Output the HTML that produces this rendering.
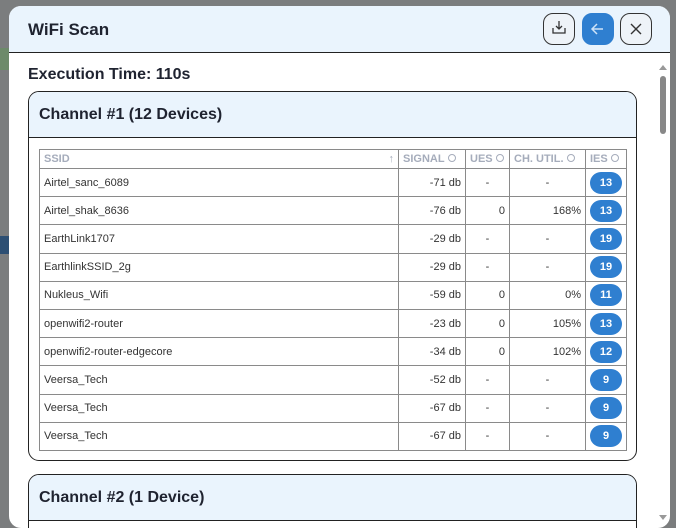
<!DOCTYPE html>
<html><head><style>
*{box-sizing:border-box;margin:0;padding:0}
body{width:676px;height:528px;overflow:hidden;background:#7b7d7e;font-family:"Liberation Sans",sans-serif;position:relative}
.modal{position:absolute;left:9px;top:6px;width:661px;height:522px;background:#fff;border-radius:12px;overflow:hidden}
.hdr{height:47px;background:#eaf4fd;border-bottom:1px solid #222;position:relative}
.hdr h1{position:absolute;left:19px;top:14px;font-size:17px;font-weight:bold;color:#1f2330}
.btn{position:absolute;top:7px;width:32px;height:32px;border:1px solid #333;border-radius:10px;background:#eef3f8}
.exec{position:absolute;left:19px;top:60px;font-size:16px;font-weight:bold;color:#1f2330}
.card{position:absolute;left:19px;width:609px;border:1px solid #222;border-radius:11px;overflow:hidden;background:#fff}
.ch{height:46px;background:#eaf4fd;border-bottom:1px solid #222;padding:14px 10px;font-size:16px;font-weight:bold;color:#1f2330}
table{position:absolute;left:10px;top:57px;border-collapse:collapse;font-size:11px;color:#333}
td,th{border:1px solid #8a8a8a;height:28.2px;padding:0 4px}
th{height:19px;color:#a5acbb;font-size:11px;text-align:left;font-weight:bold}
.r{text-align:right}.c{text-align:center}
.b{display:inline-block;width:32px;height:22px;line-height:22px;border-radius:11px;background:#2f7fd0;color:#fff;font-weight:bold;text-align:center;font-size:11px}
.o{display:inline-block;width:8px;height:8px;border:1px solid #a5acbb;border-radius:50%;margin-left:3px}
</style></head><body>
<div style="position:absolute;left:0;top:48px;width:9px;height:22px;background:#6d8a6a"></div>
<div style="position:absolute;left:0;top:236px;width:9px;height:18px;background:#2d4f73"></div>
<div class="modal">
<div class="hdr"><h1>WiFi Scan</h1>
<div class="btn" style="left:534px"><svg width="30" height="30" viewBox="0 0 30 30"><path d="M15 7v8M12 12l3 3 3-3M9 14v5h12v-5" fill="none" stroke="#333" stroke-width="1.3"/></svg></div>
<div class="btn" style="left:573px;border-color:#2f7fd0;background:#2f7fd0"><svg width="30" height="30" viewBox="0 0 30 30"><path d="M20 15H10M14 10l-5 5 5 5" fill="none" stroke="#cfe3f7" stroke-width="1.5"/></svg></div>
<div class="btn" style="left:611px"><svg width="30" height="30" viewBox="0 0 30 30"><path d="M10 10l10 10M20 10L10 20" fill="none" stroke="#333" stroke-width="1.4"/></svg></div>
</div>
<div class="exec">Execution Time: 110s</div>
<div style="position:absolute;left:651px;top:70px;width:6px;height:58px;background:#888;border-radius:3px"></div>
<div style="position:absolute;left:650px;top:59px;border:4px solid transparent;border-bottom:5px solid #999;border-top:0"></div>
<div style="position:absolute;left:650px;top:509px;border:4px solid transparent;border-top:5px solid #999;border-bottom:0"></div>
<div class="card" style="top:85px;height:370px"><div class="ch">Channel #1 (12 Devices)</div>
<table>
<tr><th style="width:359px">SSID<span style="float:right;font-weight:normal">↑</span></th><th style="width:67px">SIGNAL<span class="o"></span></th><th style="width:44px">UES<span class="o"></span></th><th style="width:76px">CH. UTIL.<span class="o"></span></th><th style="width:41px">IES<span class="o"></span></th></tr>
<tr><td>Airtel_sanc_6089</td><td class="r">-71 db</td><td class="c">-</td><td class="c">-</td><td class="c"><span class="b">13</span></td></tr>
<tr><td>Airtel_shak_8636</td><td class="r">-76 db</td><td class="r">0</td><td class="r">168%</td><td class="c"><span class="b">13</span></td></tr>
<tr><td>EarthLink1707</td><td class="r">-29 db</td><td class="c">-</td><td class="c">-</td><td class="c"><span class="b">19</span></td></tr>
<tr><td>EarthlinkSSID_2g</td><td class="r">-29 db</td><td class="c">-</td><td class="c">-</td><td class="c"><span class="b">19</span></td></tr>
<tr><td>Nukleus_Wifi</td><td class="r">-59 db</td><td class="r">0</td><td class="r">0%</td><td class="c"><span class="b">11</span></td></tr>
<tr><td>openwifi2-router</td><td class="r">-23 db</td><td class="r">0</td><td class="r">105%</td><td class="c"><span class="b">13</span></td></tr>
<tr><td>openwifi2-router-edgecore</td><td class="r">-34 db</td><td class="r">0</td><td class="r">102%</td><td class="c"><span class="b">12</span></td></tr>
<tr><td>Veersa_Tech</td><td class="r">-52 db</td><td class="c">-</td><td class="c">-</td><td class="c"><span class="b">9</span></td></tr>
<tr><td>Veersa_Tech</td><td class="r">-67 db</td><td class="c">-</td><td class="c">-</td><td class="c"><span class="b">9</span></td></tr>
<tr><td>Veersa_Tech</td><td class="r">-67 db</td><td class="c">-</td><td class="c">-</td><td class="c"><span class="b">9</span></td></tr>
</table></div>
<div class="card" style="top:468px;height:80px"><div class="ch">Channel #2 (1 Device)</div></div>
</div>
</body></html>
